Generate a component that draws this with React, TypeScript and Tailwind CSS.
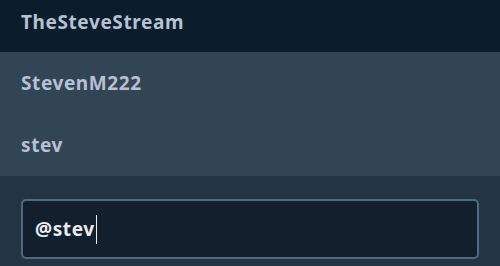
export default function App() {
  const results = ['StevenM222', 'stev']

  return (
    <div className="w-[500px] h-[266px] overflow-hidden bg-[#233442] font-['Noto_Sans','Open_Sans',sans-serif] tracking-[0.6px]">
      {/* suggestion list */}
      <div className="flex flex-col">
        <div className="h-[52px] bg-[#0b1d2b] pl-[21px] pt-[8px] text-[19px] font-bold text-[#b7c1d4]">
          TheSteveStream
        </div>
        {results.map((name) => (
          <div
            key={name}
            className="h-[62px] bg-[#324554] pl-[21px] flex items-center text-[19px] font-bold text-[#b7c1d4]"
          >
            {name}
          </div>
        ))}
      </div>

      {/* input */}
      <div className="px-[21px] pt-[23px]">
        <div className="h-[60px] rounded-[5px] border-2 border-[#4e6a82] bg-[#12202e] flex items-center pl-[12px]">
          <span className="text-[19px] font-bold text-[#e9edf1]">@stev</span>
          <span className="ml-[1px] w-[1.5px] h-[29px] bg-[#e9edf1]" />
        </div>
      </div>
    </div>
  )
}
